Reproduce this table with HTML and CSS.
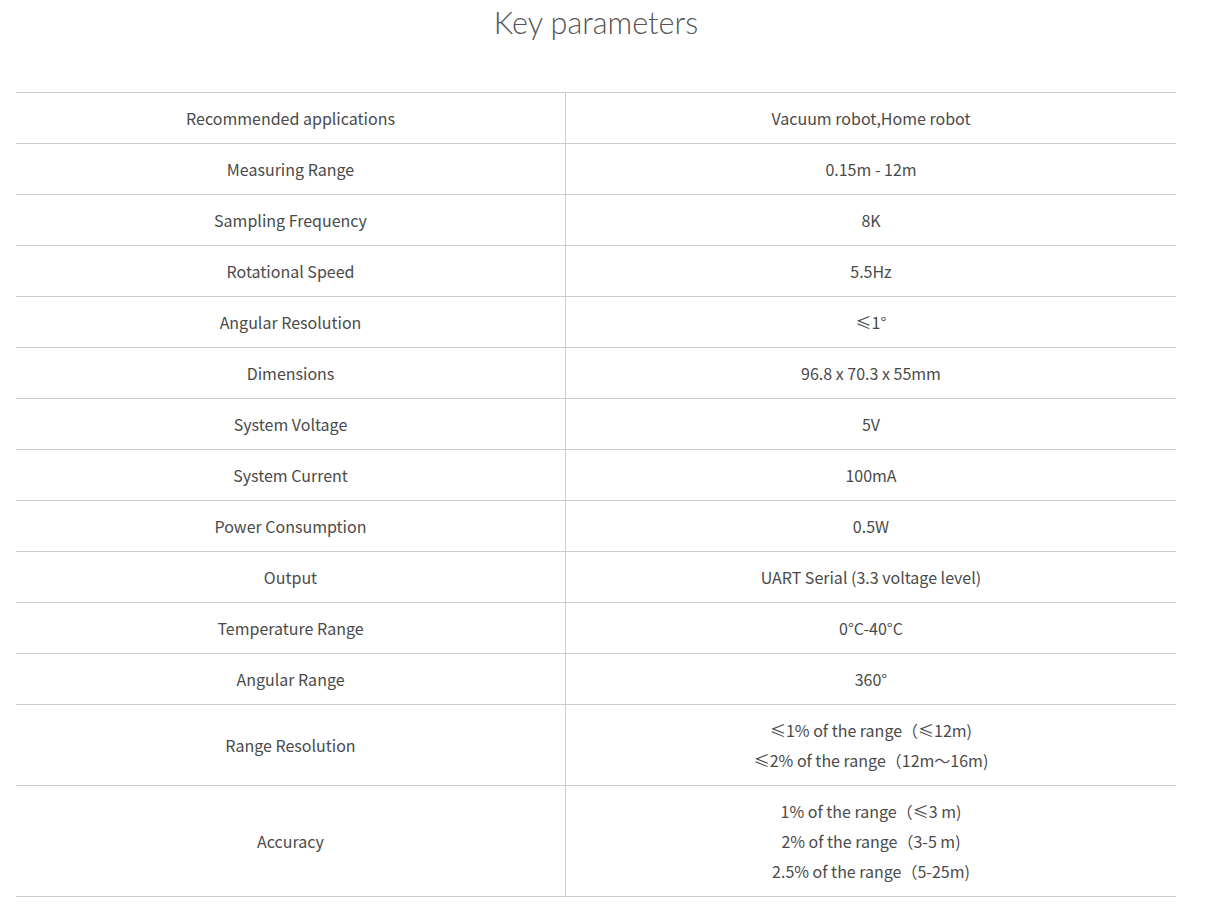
FILE: index.html
```html
<!DOCTYPE html>
<html>
<head>
<meta charset="utf-8">
<link rel="stylesheet" href="styles.css">
</head>
<body>
<div class="wrap">
  <h2 class="title">Key parameters</h2>
  <table class="params">
    <tr><td>Recommended applications</td><td>Vacuum robot,Home robot</td></tr>
    <tr><td>Measuring Range</td><td>0.15m - 12m</td></tr>
    <tr><td>Sampling Frequency</td><td>8K</td></tr>
    <tr><td>Rotational Speed</td><td>5.5Hz</td></tr>
    <tr><td>Angular Resolution</td><td>≤1°</td></tr>
    <tr><td>Dimensions</td><td>96.8 x 70.3 x 55mm</td></tr>
    <tr><td>System Voltage</td><td>5V</td></tr>
    <tr><td>System Current</td><td>100mA</td></tr>
    <tr><td>Power Consumption</td><td>0.5W</td></tr>
    <tr><td>Output</td><td>UART Serial (3.3 voltage level)</td></tr>
    <tr><td>Temperature Range</td><td>0°C-40°C</td></tr>
    <tr><td>Angular Range</td><td>360°</td></tr>
    <tr><td>Range Resolution</td><td>≤1% of the range（≤12m)<br>≤2% of the range（12m～16m)</td></tr>
    <tr><td>Accuracy</td><td>1% of the range（≤3 m)<br>2% of the range（3-5 m)<br>2.5% of the range（5-25m)</td></tr>
  </table>
</div>
</body>
</html>
```

FILE: styles.css
```css
html, body {
  margin: 0;
  padding: 0;
  background: #fff;
}
.wrap {
  width: 1160px;
  margin-left: 16px;
}
.title {
  margin: 0;
  padding-top: 3px;
  height: 92px;
  box-sizing: border-box;
  text-align: center;
  font-family: Lato, "Liberation Sans", sans-serif;
  font-weight: 300;
  font-size: 30.6px;
  line-height: 40px;
  color: #555;
}
.params {
  width: 1160px;
  border-collapse: collapse;
  table-layout: fixed;
  border-top: 1px solid #ccc;
  font-family: "Noto Sans CJK SC", "Noto Sans", sans-serif;
  font-size: 16px;
  color: #4a4a4a;
}
.params td {
  padding: 10px 0;
  line-height: 30px;
  text-align: center;
  vertical-align: middle;
  border-bottom: 1px solid #ccc;
}
.params td:first-child {
  width: 549px;
  border-right: 1px solid #ccc;
}
```
